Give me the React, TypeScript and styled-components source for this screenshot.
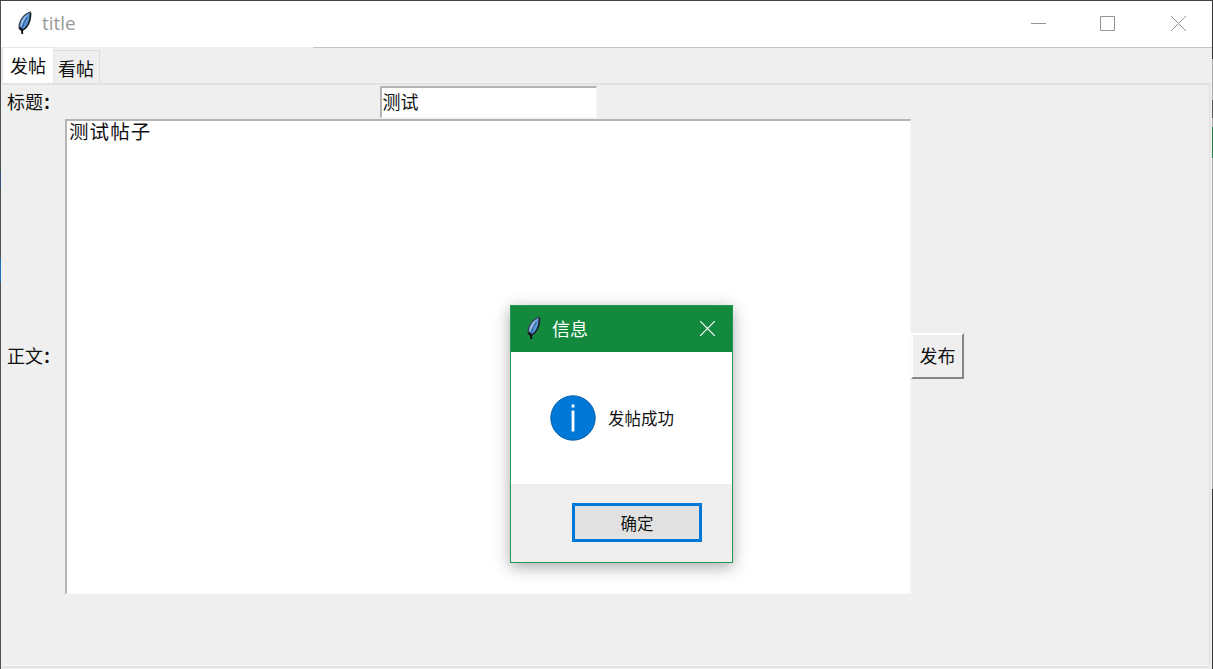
import React from "react";
import styled, { createGlobalStyle } from "styled-components";

const Global = createGlobalStyle`
  *{box-sizing:border-box}
  html,body{margin:0;padding:0;overflow:hidden}
  body{font-family:"Noto Sans CJK SC",sans-serif;color:#111;font-size:18px;line-height:26px}
`;

const Desktop = styled.div`
  position: relative;
  display: flex;
  width: 1213px;
  height: 669px;
  overflow: hidden;
  background: #efefef;
  border-top: 1px solid #444;
`;
const LeftEdge = styled.div`
  flex: none;
  width: 1px;
  background: linear-gradient(#505050 0 170px, #36507a 170px 187px, #505050 187px 257px, #1f6fb5 257px 281px, #505050 281px);
`;
const RightEdge = styled.div`
  flex: none;
  width: 1px;
  background: linear-gradient(#333 0 58px, #aaa 58px 99px, #555 99px 117px, #aaa 117px 126px, #1f7a45 126px 157px, #aaa 157px 488px, #333 488px);
`;
const Window = styled.div`
  flex: 1;
  min-width: 0;
  display: flex;
  flex-direction: column;
`;
const TitleBar = styled.header`
  height: 46px;
  flex: none;
  display: flex;
  align-items: center;
  background: #fff;
  padding-left: 14px;
`;
const TitleText = styled.span`
  flex: 1;
  margin-left: 7px;
  padding-bottom: 2px;
  color: #999;
  font: 18.9px/26px "Open Sans", sans-serif;
`;
const Controls = styled.svg`
  display: block;
  width: 211px;
  height: 46px;
  fill: none;
  stroke: #949494;
`;
const Divider = styled.div`
  height: 1px;
  flex: none;
  margin-left: 312px;
  background: #c3c3c3;
`;
const Tabs = styled.nav`
  flex: none;
  height: 35px;
  display: flex;
  align-items: flex-end;
  padding-left: 1px;
`;
const Tab = styled.div<{ $active?: boolean }>`
  width: ${(p) => (p.$active ? 52 : 46)}px;
  height: ${(p) => (p.$active ? 36 : 33)}px;
  margin-top: ${(p) => (p.$active ? -1 : 0)}px;
  padding: ${(p) => (p.$active ? "4px 0 0 7px" : "4px 0 0 4px")};
  background: ${(p) => (p.$active ? "#fff" : "#efefef")};
  border: ${(p) => (p.$active ? "1px solid #e6e6e6" : "1px solid #dcdcdc")};
  border-bottom: 0;
  border-left-width: ${(p) => (p.$active ? 1 : 0)}px;
  white-space: nowrap;
`;
const Pane = styled.main`
  flex: none;
  width: 1208px;
  height: 583px;
  margin-left: 1px;
  border-top: 2px solid #e2e2e2;
  border-right: 1px solid #e0e0e0;
  border-bottom: 1px solid #fafafa;
  display: grid;
  grid-template-columns: 63px 846px 53px;
  grid-template-rows: 34px 475px;
  align-items: center;
`;
const BottomEdge = styled.div`
  height: 2px;
  margin: 0 2px 0 1px;
  background: #e2e2e2;
`;
const Label = styled.label`
  padding: 0 0 3px 5px;
  white-space: nowrap;
`;
const Colon = styled.span`
  margin-left: 1px;
  font-weight: 500;
  font-size: 20px;
  line-height: 20px;
`;
const Sunken = styled.div`
  background: #fff;
  border-style: solid;
  border-width: 2px 1px 1px 2px;
  border-color: #b4b4b4 #f8f8f8 #f8f8f8 #b4b4b4;
`;
const Entry = styled(Sunken)`
  justify-self: center;
  width: 217px;
  height: 32px;
  padding: 0 0 0 1px;
`;
const Editor = styled(Sunken)`
  height: 475px;
  padding: 0 2px;
  font-size: 19.5px;
  line-height: 20px;
  letter-spacing: 1.1px;
`;
const Publish = styled.button`
  width: 53px;
  height: 46px;
  margin-top: -1px;
  padding: 0 0 2px;
  font: inherit;
  color: inherit;
  background: #efefef;
  border: solid;
  border-width: 2px;
  border-color: #fff #858585 #858585 #fff;
`;
const Dialog = styled.section`
  position: absolute;
  left: 510px;
  top: 304px;
  width: 223px;
  height: 258px;
  display: flex;
  flex-direction: column;
  border: 1px solid #229954;
  background: #fff;
  box-shadow: 0 4px 15px rgba(0, 0, 0, 0.34);
`;
const DialogTitle = styled.header`
  height: 46px;
  flex: none;
  display: flex;
  align-items: center;
  padding: 0 17px 1px 13px;
  background: #12893d;
  color: #fff;
  & > span {
    flex: 1;
    margin-left: 8px;
    padding-bottom: 2px;
  }
`;
const CloseIcon = styled.svg`
  width: 15px;
  height: 15px;
  stroke: #fff;
  stroke-width: 1.2;
`;
const Message = styled.div`
  flex: 1;
  display: flex;
  align-items: center;
  gap: 12px;
  padding-left: 39px;
  font-size: 16.5px;
`;
const Footer = styled.footer`
  height: 78px;
  display: flex;
  justify-content: flex-end;
  align-items: center;
  padding: 0 30px 1px 0;
  background: #efefef;
`;
const OkButton = styled.button`
  width: 130px;
  height: 39px;
  padding: 0;
  color: inherit;
  font: 16.5px/24px "Noto Sans CJK SC", sans-serif;
  border: 3px solid #0078d7;
  background: #e1e1e1;
`;
const FeatherSvg = styled.svg`
  flex: none;
  width: 20px;
  height: 26px;
`;

function Feather() {
  return (
    <FeatherSvg viewBox="0 0 20 26">
      <path d="M15.500 1 Q9.500 3 6.500 8 Q3.500 13 4.300 17.500 L6.500 19.500 Q10 19 13 14 Q16 8 15.500 1Z" fill="#5b97dc" stroke="#38414b" strokeWidth="1.300" strokeLinejoin="round" />
      <path d="M14 2.500 Q9 5.500 6.500 10.500 Q5.200 14 5.800 16.500 Q8 9 14 2.500Z" fill="#a9c6de" />
      <path d="M15.500 2 Q16 8 13 13.500 Q10.500 17.500 8 19" fill="none" stroke="#171c22" strokeWidth="1.400" />
      <path d="M12.500 6 Q8.500 11 7 18" fill="none" stroke="#234777" strokeWidth="0.900" />
      <path d="M4.500 16.500 L7 19 L7.300 23" fill="none" stroke="#080b0e" strokeWidth="1.800" />
    </FeatherSvg>
  );
}

export default function App() {
  return (
    <Desktop>
      <Global />
      <LeftEdge />
      <Window>
        <TitleBar>
          <Feather />
          <TitleText>title</TitleText>
          <Controls viewBox="0 0 211 46">
            <path d="M30 22.500H45M99.500 15.500H113.500V29.500H99.500Z" />
            <path d="M170 15L185 30M185 15L170 30" />
          </Controls>
        </TitleBar>
        <Divider />
        <Tabs>
          <Tab $active>发帖</Tab>
          <Tab>看帖</Tab>
        </Tabs>
        <Pane>
          <Label>标题<Colon>:</Colon></Label>
          <Entry>测试</Entry>
          <div />
          <Label>正文<Colon>:</Colon></Label>
          <Editor>测试帖子</Editor>
          <Publish>发布</Publish>
        </Pane>
        <BottomEdge />
      </Window>
      <RightEdge />
      <Dialog>
        <DialogTitle>
          <Feather />
          <span>信息</span>
          <CloseIcon viewBox="0 0 15 15">
            <path d="M0 0L15 15M15 0L0 15" />
          </CloseIcon>
        </DialogTitle>
        <Message>
          <svg width="46" height="46" viewBox="0 0 46 46">
            <circle cx="23" cy="23" r="22.200" fill="#0078d7" stroke="#075fa9" />
            <path d="M23 15.500V36.500M23 9.500V12.500" stroke="#fff" strokeWidth="2.800" fill="none" />
          </svg>
          <span>发帖成功</span>
        </Message>
        <Footer>
          <OkButton>确定</OkButton>
        </Footer>
      </Dialog>
    </Desktop>
  );
}
